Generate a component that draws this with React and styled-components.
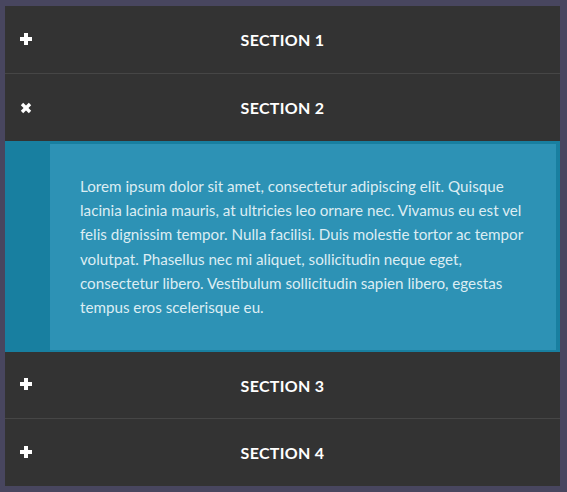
import React, { useState } from 'react'
import styled, { createGlobalStyle } from 'styled-components'

const GlobalStyle = createGlobalStyle`
  html, body {
    margin: 0;
    padding: 0;
    background: #48465f;
  }
  body {
    font-family: Lato, "Open Sans", sans-serif;
  }
`

const Page = styled.div`
  padding: 6px 7px 5px 5px;
  min-height: 492px;
  box-sizing: border-box;
`

const Accordion = styled.div`
  background: #333333;
`

const Header = styled.div`
  position: relative;
  display: flex;
  align-items: center;
  justify-content: center;
  height: ${props => props.height || 67}px;
  border-top: ${props => (props.first ? 'none' : '1px solid #464646')};
  color: #ffffff;
  font-weight: bold;
  font-size: 16px;
  letter-spacing: 0.3px;
  cursor: pointer;
`

const Icon = styled.span`
  position: absolute;
  left: 15px;
  top: 50%;
  transform: translateY(${props => (props.open ? '-50%' : 'calc(-50% - 1px)')});
  display: flex;
  color: #ffffff;
`

const Content = styled.div`
  background: #187fa0;
  padding: 3px 4px 2px 45px;
`

const Inner = styled.div`
  background: #2d92b5;
  padding: 30px 30px 31px 30px;
  color: #dcedf3;
  font-size: 15.2px;
  line-height: 24.2px;
`

const PlusIcon = () => (
  <svg width="12" height="12" viewBox="0 0 12 12" fill="currentColor">
    <rect x="4" y="0" width="4" height="12" />
    <rect x="0" y="4" width="12" height="4" />
  </svg>
)

const CloseIcon = () => (
  <svg width="12" height="12" viewBox="0 0 12 12" stroke="currentColor" strokeWidth="3.4">
    <line x1="2" y1="2" x2="10" y2="10" />
    <line x1="10" y1="2" x2="2" y2="10" />
  </svg>
)

const sections = [
  { title: 'SECTION 1' },
  { title: 'SECTION 2' },
  { title: 'SECTION 3', height: 66 },
  { title: 'SECTION 4' },
]

const text =
  'Lorem ipsum dolor sit amet, consectetur adipiscing elit. Quisque lacinia lacinia mauris, at ultricies leo ornare nec. Vivamus eu est vel felis dignissim tempor. Nulla facilisi. Duis molestie tortor ac tempor volutpat. Phasellus nec mi aliquet, sollicitudin neque eget, consectetur libero. Vestibulum sollicitudin sapien libero, egestas tempus eros scelerisque eu.'

export default function App() {
  const [open, setOpen] = useState(1)

  return (
    <Page>
      <GlobalStyle />
      <Accordion>
        {sections.map((s, i) => (
          <React.Fragment key={s.title}>
            <Header
              first={i === 0 || i === 2}
              height={s.height}
              onClick={() => setOpen(open === i ? -1 : i)}
            >
              <Icon open={open === i}>
                {open === i ? <CloseIcon /> : <PlusIcon />}
              </Icon>
              {s.title}
            </Header>
            {open === i && (
              <Content>
                <Inner>{text}</Inner>
              </Content>
            )}
          </React.Fragment>
        ))}
      </Accordion>
    </Page>
  )
}
